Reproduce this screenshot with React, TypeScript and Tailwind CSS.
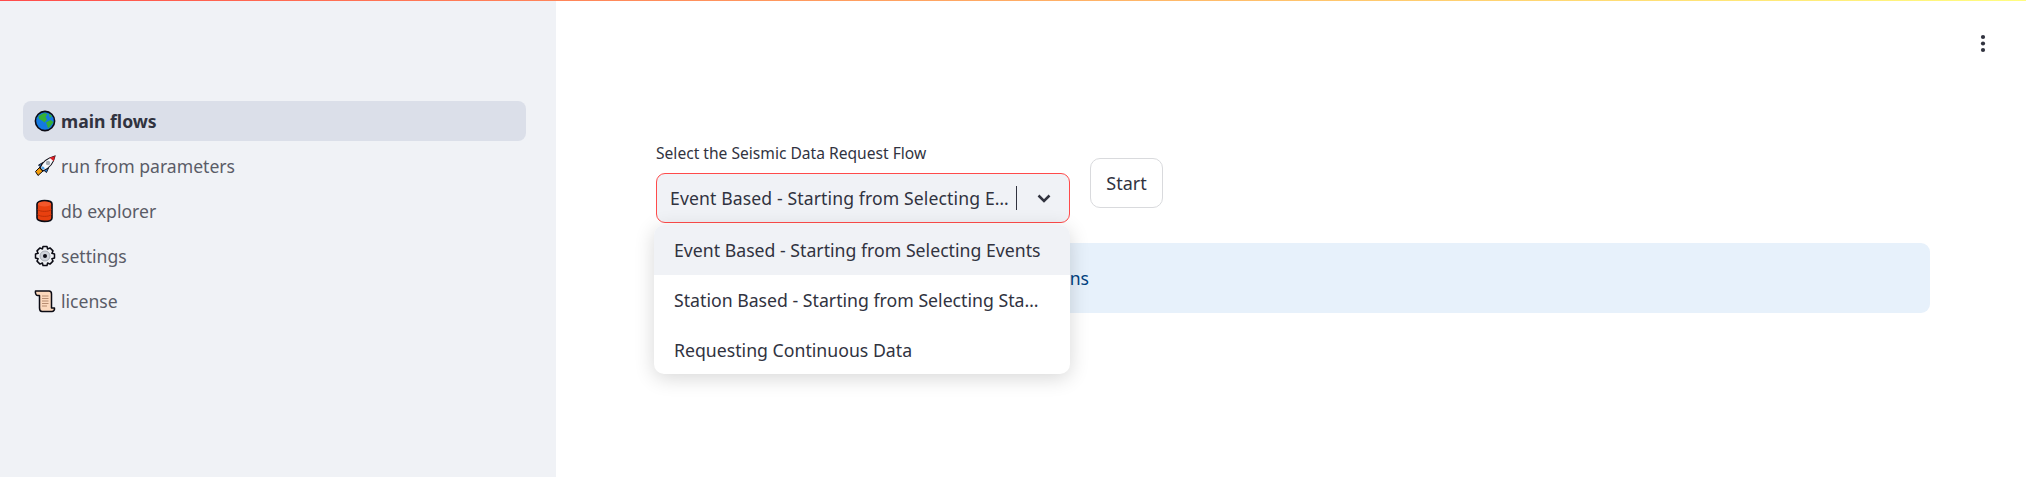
const Globe = () => (
  <svg width="22" height="22" viewBox="0 0 22 22" className="shrink-0">
    <circle cx="11" cy="11" r="9.6" fill="#1479e0" stroke="#0b0b14" strokeWidth="1.6" />
    <path d="M4.5 6 L10 3 L13.5 4 L11.5 7 L13 9.5 L10.5 12.5 L8 10.5 L5 9 Z" fill="#35b035" />
    <path d="M12 12.5 L16.5 10 L19.5 12 L16.5 16 L14 18.5 L13 15 Z" fill="#35b035" />
    <path d="M14.5 3.5 L18 6 L16 8 Z" fill="#35b035" />
  </svg>
);
const Rocket = () => (
  <svg width="22" height="22" viewBox="0 0 22 22" className="shrink-0">
    <path d="M1.5 16.5 L6 12 L9 16 L4 20.5 Z" fill="#f59e0b" stroke="#0b0b14" strokeWidth="1" />
    <path d="M4.5 10 L9 7.5 L7 12.5 Z" fill="#2b7fd8" stroke="#0b0b14" strokeWidth="0.9" />
    <path d="M12.5 17.5 L14.5 13 L9.5 15 Z" fill="#2b7fd8" stroke="#0b0b14" strokeWidth="0.9" />
    <path d="M6 13 C8 7.5 13 3 21 1 C19.5 8.5 15 13.5 9 16 Z" fill="#f7f8fb" stroke="#0b0b14" strokeWidth="1.1" />
    <path d="M15.5 2.8 L21 1 L19.8 6.3 Z" fill="#d81f26" />
    <circle cx="14" cy="8" r="2.2" fill="#a4acb5" />
    <path d="M8 12 L10 14" stroke="#48a3f0" strokeWidth="2.4" />
  </svg>
);
const Db = () => (
  <svg width="22" height="24" viewBox="0 0 22 24" className="shrink-0">
    <path d="M3 5 C3 0.5 18 0.5 18 5 L18 19 C18 23.5 3 23.5 3 19 Z" fill="#e8400f" stroke="#0b0b14" strokeWidth="1.6" />
    <ellipse cx="10.5" cy="5" rx="6.5" ry="2.4" fill="#f2572a" />
    <path d="M3.5 10.5 C6 13 15 13 17.5 10.5 M3.5 15.5 C6 18 15 18 17.5 15.5" stroke="#b72c06" strokeWidth="0.9" fill="none" />
  </svg>
);
const Gear = () => (
  <svg width="22" height="22" viewBox="0 0 22 22" className="shrink-0">
    <path d="M9 1.5 H13 L13.6 4 L16 2.9 L19 5.9 L17.9 8.3 L20.5 9 V13 L17.9 13.7 L19 16.1 L16 19.1 L13.6 18 L13 20.5 H9 L8.4 18 L6 19.1 L3 16.1 L4.1 13.7 L1.5 13 V9 L4.1 8.3 L3 5.9 L6 2.9 L8.4 4 Z" fill="#eef0f3" stroke="#0b0b14" strokeWidth="1.5" strokeLinejoin="round" />
    <circle cx="11" cy="11" r="5" fill="#cfd3da" stroke="#9aa0a8" strokeWidth="0.8" />
    <circle cx="11" cy="11" r="2" fill="#0b0b14" />
  </svg>
);
const Scroll = () => (
  <svg width="22" height="24" viewBox="0 0 22 24" className="shrink-0">
    <path d="M1.5 2 H15 C17 2 17.5 3.5 17.5 5 V19 H20.5 C20.8 21 19.5 22.5 18 22.5 H8 C6.5 22.5 5.5 21 5.5 19 V6.5 H3.5 C2 6.5 1 4 1.5 2 Z" fill="#fcd9bd" stroke="#0b0b14" strokeWidth="1.5" strokeLinejoin="round" />
    <path d="M8 7 H14.5 M8 9.5 H14.5 M8 12 H14.5 M8 14.5 H14.5 M8 17 H13" stroke="#a57a5e" strokeWidth="0.8" />
  </svg>
);

const items = [
  { label: "main flows", icon: <Globe />, active: true },
  { label: "run from parameters", icon: <Rocket /> },
  { label: "db explorer", icon: <Db /> },
  { label: "settings", icon: <Gear /> },
  { label: "license", icon: <Scroll /> },
];

export default function App() {
  return (
    <div className="relative h-[477px] w-[2026px] overflow-hidden bg-white font-['Noto_Sans',sans-serif] text-[#31333f]">
      <div className="absolute left-0 right-0 top-0 z-10 h-[1px] bg-gradient-to-r from-[#ff4b4b] to-[#fffd80]" />
      <div className="flex h-full">
        <aside className="h-full w-[556px] shrink-0 bg-[#f0f2f6] pl-[23px] pr-[30px] pt-[101px]">
          <nav className="flex flex-col gap-[5px]">
            {items.map((it) => (
              <div
                key={it.label}
                className={`flex h-[40px] items-center gap-[5px] rounded-[8px] pl-[10px] text-[17.6px] ${
                  it.active ? "bg-[#dbdfe9] font-bold text-[#31333f]" : "text-[#5a5c67]"
                }`}
              >
                <span className="flex w-[23px] justify-center">{it.icon}</span>
                <span>{it.label}</span>
              </div>
            ))}
          </nav>
        </aside>

        <main className="flex-1 pl-[100px] pr-[96px] pt-[140px]">
          <div className="flex items-start gap-[20px]">
            <div className="relative w-[414px]">
              <div className="mb-[7px] h-[26px] text-[15.6px] leading-[26px]">Select the Seismic Data Request Flow</div>
              <div className="flex h-[50px] items-center rounded-[9px] border border-[#ff4b4b] bg-[#f0f2f6] pl-[13px] pr-[10px] text-[17.6px] tracking-[0.12px]">
                <span className="min-w-0 flex-1 truncate">Event Based - Starting from Selecting E…</span>
                <span className="ml-[4px] h-[24px] w-px shrink-0 bg-[#31333f]" />
                <svg width="18" height="18" viewBox="0 0 18 18" className="ml-[18px] mr-[6px] shrink-0">
                  <path d="M3.5 6.5 L9 12 L14.5 6.5" fill="none" stroke="#31333f" strokeWidth="2.5" />
                </svg>
              </div>
              <div className="absolute left-[-2px] right-0 top-[85px] z-20 overflow-hidden rounded-[10px] bg-white text-[17.7px] text-[#31333f] shadow-[0_4px_20px_rgba(0,0,0,0.16)]">
                <div className="flex h-[50px] items-center bg-[#f0f2f6] px-[20px]">
                  <span className="truncate">Event Based - Starting from Selecting Events</span>
                </div>
                <div className="flex h-[50px] items-center px-[20px]">
                  <span className="truncate">Station Based - Starting from Selecting Sta…</span>
                </div>
                <div className="flex h-[49px] items-center px-[20px] pt-[1px]">
                  <span className="truncate">Requesting Continuous Data</span>
                </div>
              </div>
            </div>
            <button className="mt-[18px] h-[50px] w-[73px] rounded-[10px] border border-[#d9dadd] bg-white pt-[1px] text-[18px] text-[#31333f]">
              Start
            </button>
          </div>
          <div className="mt-[20px] flex h-[70px] items-center rounded-[9px] bg-[#e7f1fb] pl-[22px] pt-[1px] text-[17.6px] text-[#004280]">
            Select a flow and click Start to see the instructions
          </div>
        </main>
      </div>
      <svg width="6" height="20" viewBox="0 0 6 20" className="absolute left-[1980px] top-[33px]">
        <circle cx="3" cy="4" r="2.1" fill="#31333f" />
        <circle cx="3" cy="10.5" r="2.1" fill="#31333f" />
        <circle cx="3" cy="17" r="2.1" fill="#31333f" />
      </svg>
    </div>
  );
}
